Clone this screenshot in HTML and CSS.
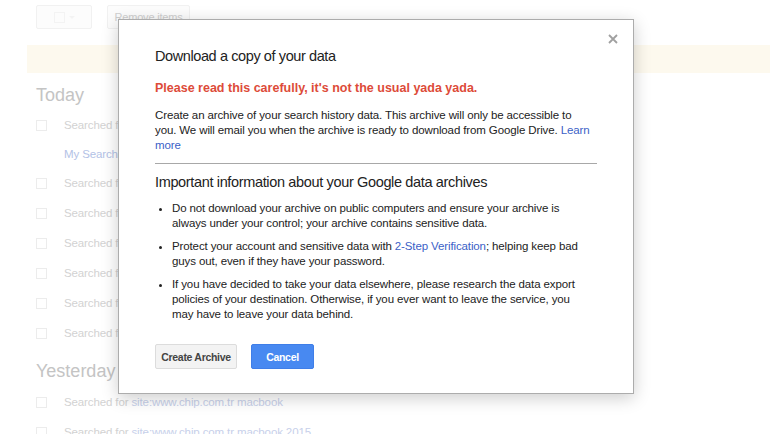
FILE: index.html
```html
<!DOCTYPE html>
<html>
<head>
<meta charset="utf-8">
<link rel="stylesheet" href="styles.css">
</head>
<body>
<div class="page">
  <div class="toolbar">
    <div class="tbtn tbtn-check"><span class="mini-box"></span><span class="caret"></span></div>
    <div class="tbtn tbtn-remove">Remove items</div>
  </div>
  <div class="banner"></div>
  <div class="list">
    <div class="day">Today</div>
    <div class="row"><span class="cb"></span><span class="txt">Searched for site:www.chip.com.tr macbook air</span></div>
    <div class="row row-link"><span class="link">My Searches</span></div>
    <div class="row"><span class="cb"></span><span class="txt">Searched for site:www.chip.com.tr</span></div>
    <div class="row"><span class="cb"></span><span class="txt">Searched for site:www.chip.com.tr</span></div>
    <div class="row"><span class="cb"></span><span class="txt">Searched for site:www.chip.com.tr</span></div>
    <div class="row"><span class="cb"></span><span class="txt">Searched for site:www.chip.com.tr</span></div>
    <div class="row"><span class="cb"></span><span class="txt">Searched for site:www.chip.com.tr</span></div>
    <div class="row"><span class="cb"></span><span class="txt">Searched for site:www.chip.com.tr</span></div>
    <div class="day day-y">Yesterday</div>
    <div class="row"><span class="cb"></span><span class="txt">Searched for <span class="q">site:www.chip.com.tr macbook</span></span></div>
    <div class="row"><span class="cb"></span><span class="txt">Searched for <span class="q">site:www.chip.com.tr macbook 2015</span></span></div>
  </div>
</div>

<div class="dialog">
  <span class="close"><svg width="10" height="10" viewBox="0 0 10 10"><path d="M1 1L9 9M9 1L1 9" stroke="#a0a0a0" stroke-width="1.8"/></svg></span>
  <h1 class="title">Download a copy of your data</h1>
  <p class="warn">Please read this carefully, it's not the usual yada yada.</p>
  <p class="intro">Create an archive of your search history data. This archive will only be accessible to you. We will email you when the archive is ready to download from Google Drive. <a class="a">Learn more</a></p>
  <hr class="rule">
  <h2 class="sub">Important information about your Google data archives</h2>
  <ul class="bullets">
    <li>Do not download your archive on public computers and ensure your archive is always under your control; your archive contains sensitive data.</li>
    <li>Protect your account and sensitive data with <a class="a">2-Step Verification</a>; helping keep bad guys out, even if they have your password.</li>
    <li>If you have decided to take your data elsewhere, please research the data export policies of your destination. Otherwise, if you ever want to leave the service, you may have to leave your data behind.</li>
  </ul>
  <div class="actions">
    <button class="btn btn-grey">Create Archive</button>
    <button class="btn btn-blue">Cancel</button>
  </div>
</div>
</body>
</html>
```

FILE: styles.css
```css
html, body {
  margin: 0;
  padding: 0;
  background: #fff;
  font-family: "Liberation Sans", Arial, sans-serif;
  overflow: hidden;
  width: 770px;
  height: 434px;
}
.page {
  position: relative;
}
.toolbar {
  display: flex;
  gap: 15px;
  padding: 5px 0 0 36px;
  height: 24px;
}
.tbtn {
  box-sizing: border-box;
  height: 24px;
  border: 1px solid #f1f1f1;
  background: #fcfcfc;
  border-radius: 2px;
  font-size: 11px;
  color: #cfcfcf;
  line-height: 22px;
  letter-spacing: -0.2px;
  text-align: center;
}
.tbtn-check {
  width: 56px;
  display: flex;
  align-items: center;
  justify-content: center;
  gap: 4px;
}
.tbtn-remove {
  width: 83px;
}
.mini-box {
  width: 9px;
  height: 9px;
  border: 1px solid #f3f3f3;
}
.caret {
  width: 0;
  height: 0;
  border-left: 3px solid transparent;
  border-right: 3px solid transparent;
  border-top: 3px solid #f3f3f3;
}
.banner {
  margin: 16px 0 0 27px;
  height: 28px;
  background: #fdf9ee;
}
.list {
  padding: 7px 0 0 36px;
}
.day {
  font-size: 18px;
  line-height: 30px;
  color: #c4c4c4;
}
.day-y {
  margin-top: 8px;
}
.row {
  display: flex;
  align-items: center;
  height: 30px;
  font-size: 11.5px;
  letter-spacing: -0.12px;
  color: #d2d2d2;
}
.row-link {
  height: 28px;
  padding-left: 28px;
}
.link {
  color: #b3c2e6;
}
.cb {
  box-sizing: border-box;
  width: 11px;
  height: 11px;
  border: 1px solid #ececec;
  margin-right: 17px;
}
.q {
  color: #c7d0ea;
}
.day-y + .row {
  margin-top: 1px;
}
.dialog {
  position: absolute;
  left: 118px;
  top: 19px;
  width: 516px;
  height: 375px;
  box-sizing: border-box;
  background: #fff;
  border: 1px solid #acacac;
  box-shadow: 0 4px 16px rgba(0,0,0,0.2);
  padding: 26px 36px 0 36px;
  color: #222;
}
.close {
  position: absolute;
  right: 15px;
  top: 14px;
  width: 10px;
  height: 10px;
  display: block;
}
.close svg { display: block; }
.title {
  margin: 0;
  font-size: 14.5px;
  letter-spacing: -0.4px;
  font-weight: normal;
  line-height: 20px;
  color: #222;
}
.warn {
  margin: 14px 0 0;
  font-size: 12.5px;
  line-height: 16px;
  font-weight: bold;
  color: #dd4b39;
}
.intro {
  margin: 12px 0 0;
  padding-right: 7px;
  font-size: 11.5px;
  letter-spacing: -0.12px;
  line-height: 15px;
  color: #222;
}
.a {
  color: #3b5fc7;
}
.rule {
  margin: 10px 0 0;
  border: 0;
  border-top: 1px solid #a8a8a8;
  height: 0;
}
.sub {
  margin: 8px 0 0;
  font-size: 14.5px;
  letter-spacing: -0.35px;
  font-weight: normal;
  line-height: 20px;
  color: #222;
}
.bullets {
  margin: 9px 0 0;
  padding: 0 12px 0 17px;
  font-size: 11.5px;
  letter-spacing: -0.12px;
  line-height: 15px;
  color: #222;
}
.bullets li {
  margin: 0 0 8px;
}
.actions {
  display: flex;
  gap: 14px;
  margin-top: 22px;
}
.btn {
  box-sizing: border-box;
  height: 25px;
  border-radius: 2px;
  font-family: "Liberation Sans", Arial, sans-serif;
  font-size: 10.5px;
  letter-spacing: -0.3px;
  font-weight: bold;
  padding: 0;
  white-space: nowrap;
  cursor: default;
}
.btn-grey {
  width: 82px;
  background: #f3f3f3;
  border: 1px solid #dcdcdc;
  color: #444;
}
.btn-blue {
  width: 63px;
  background: #4889f1;
  border: 1px solid #3f7ee8;
  color: #fff;
}
```
